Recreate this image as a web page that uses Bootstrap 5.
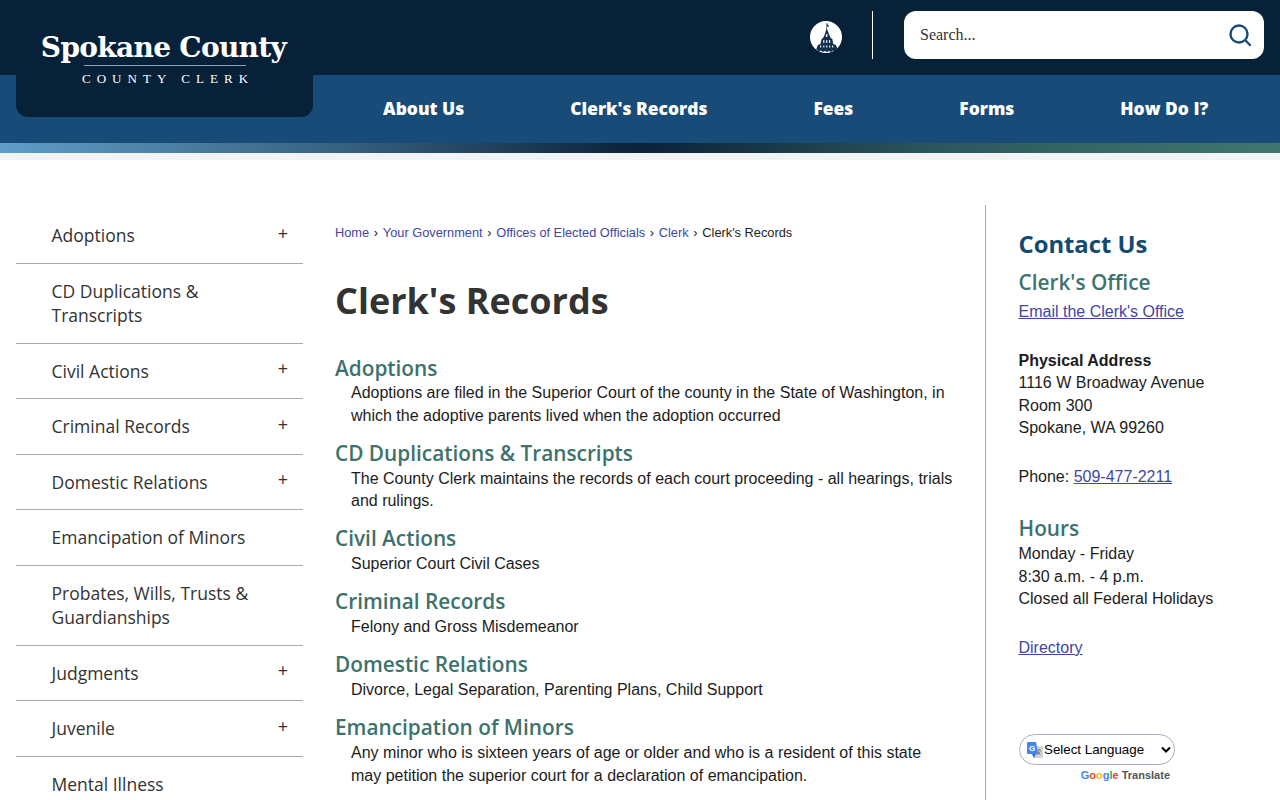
<!DOCTYPE html>
<html lang="en">
<head>
    <meta charset="UTF-8">
    <meta name="viewport" content="width=device-width, initial-scale=1.0">
    <title>Clerk's Records - Spokane County</title>
    <link href="https://cdn.jsdelivr.net/npm/bootstrap@5.3.0/dist/css/bootstrap.min.css" rel="stylesheet">
    <script src="https://cdn.jsdelivr.net/npm/bootstrap@5.3.0/dist/js/bootstrap.bundle.min.js"></script>
    <style>
        html, body { height: 800px; overflow: hidden; }
        body { font-family: "Liberation Sans", Arial, sans-serif; font-size: 16px; color: #1c1c1c; background: #fff; }
        a { color: #3f46a5; }

        /* header */
        .top-strip { height: 75px; background: #072139; padding: 11px 16px 0 0; }
        .seal-link { width: 32px; height: 32px; margin-top: 10px; margin-right: 30px; }
        .top-rule { width: 1px; height: 48px; background: #fff; margin-right: 31px; }
        .search-box { width: 360px; height: 48px; background: #fff; border-radius: 12px; padding: 0 12px 0 16px; }
        .search-box span { font-family: "Liberation Serif", serif; font-size: 16px; color: #333; }
        .nav-strip { height: 68px; background: #184b77; padding-left: 330px; padding-right: 19px; }
        .logo-block { position: absolute; left: 16px; top: 0; width: 297px; height: 117px; background: #072139; border-radius: 0 0 12px 12px; text-align: center; color: #fff; padding-top: 30px; }
        .logo-name { font-family: "DejaVu Serif", serif; font-weight: 700; font-size: 28px; line-height: 35px; letter-spacing: -.68px; padding-right: 2px; }
        .logo-rule { width: 162px; height: 1px; background: #8fa0b2; margin: 0 auto; }
        .logo-sub { font-family: "Liberation Serif", serif; font-size: 13px; letter-spacing: 6.05px; padding-left: 7px; line-height: 20px; margin-top: 3px; }
        .main-link { font-family: "Open Sans", sans-serif; font-weight: 800; font-size: 17.4px; color: #fff; text-decoration: none; line-height: 67px; padding: 0 53px; white-space: nowrap; }
        .color-band { height: 10px; background: linear-gradient(90deg, #5f9dc8 0%, #3a6584 25%, #0a2239 50%, #2e5a5e 75%, #41766f 100%); }
        .grey-band { height: 7px; background: #f1f3f5; }

        /* layout */
        .page-body { padding-top: 45px; }
        .side-col { width: 287px; margin: 3.4px 0 0 16px; flex: none; }
        .mid-col { width: 619px; margin-left: 32px; flex: none; }
        .right-col { border-left: 1px solid #a9a9a9; margin-left: 31px; padding-left: 32.5px; width: 295px; height: 600px; flex: none; position: relative; }

        /* side menu */
        .side-item { font-family: "Open Sans", sans-serif; font-size: 17.5px; line-height: 24.5px; color: #333; border-color: #a9a9a9; padding: 14.8px 50px 15.2px 35.5px; }
        .side-plus { position: absolute; right: 15px; top: 12.5px; font-size: 18px; color: #333; }

        /* middle */
        .crumbs { --bs-breadcrumb-margin-bottom: 0; --bs-breadcrumb-item-padding-x: 4.7px; --bs-breadcrumb-divider-color: #1c1c1c; --bs-breadcrumb-item-active-color: #1c1c1c; --bs-breadcrumb-divider: "›"; font-size: 12.8px; line-height: 16px; margin-top: 20px; }
        .crumbs a { text-decoration: none; }
        .page-title { font-family: "Open Sans", sans-serif; font-weight: 700; font-size: 36px; line-height: 46px; color: #333; margin: 37px 0 29.6px; }
        .rec-head { font-family: "Open Sans", sans-serif; font-weight: 600; font-size: 20.8px; line-height: 28.8px; color: #3d726d; margin: 0; }
        .rec-text { margin: 0 0 11.8px 16px; line-height: 22.4px; }

        /* right */
        .contact-title { font-family: "Open Sans", sans-serif; font-weight: 700; font-size: 23.8px; line-height: 32px; color: #134a72; margin: 23px 0 8px; }
        .contact-sub { font-family: "Open Sans", sans-serif; font-weight: 600; font-size: 20.8px; line-height: 28px; color: #3d726d; margin: 0 0 1px; }
        .office-head { margin-bottom: 5px; }
        .contact-text { line-height: 22.4px; margin: 0 0 26.35px; }
        .translate-box { position: absolute; left: 33px; top: 529px; }
        .lang-pick { width: 156px; height: 31px; border: 1px solid #a9b0bd; border-radius: 16px; background: #fff; display: flex; align-items: center; padding: 0 3px 0 6px; font-size: 13.33px; color: #000; }
        .powered { font-size: 11px; font-weight: 700; color: #555; text-align: right; margin: 3px 5px 0 0; line-height: 14px; }
        .powered b:nth-child(1) { color: #4285f4; } .powered b:nth-child(2) { color: #ea4335; } .powered b:nth-child(3) { color: #fbbc05; } .powered b:nth-child(4) { color: #4285f4; } .powered b:nth-child(5) { color: #34a853; } .powered b:nth-child(6) { color: #ea4335; }
        .gt-letter { font-family: "Liberation Sans", sans-serif; font-size: 8px; font-weight: 700; fill: #fff; }
    </style>
</head>
<body>

<header class="position-relative">
    <div class="top-strip d-flex justify-content-end">
        <div class="seal-link">
            <svg width="32" height="32" viewBox="0 0 32 32">
                <circle cx="16" cy="16" r="16" fill="#fff"/>
                <path d="M16.4 2h.7v6h-.7z M17.1 2.2l2.2 3.2-2.2.6z" fill="#33506c"/>
                <path d="M16.7 7l2.6 7 1.4 3 1.6 1 1 5 2.6 1 1.6 4-2.6 2.4-2-1-2 1.6-2-1-2 1-2-1-2 1-2-1.6-2 1-2.6-2.4 1.6-4 2.6-1 1-5 1.6-1 1.4-3z" fill="#14304c"/>
                <path d="M15.8 13h1.6v3h-1.6z M13.2 19h1.2v3h-1.2z M16.1 19h1.2v3h-1.2z M19 19h1.2v3h-1.2z M10 24.5h1.2v2h-1.2z M13.2 24.5h1.2v2h-1.2z M16.1 24.5h1.2v2h-1.2z M19 24.5h1.2v2h-1.2z M22 24.5h1.2v2h-1.2z" fill="#dfe5ea"/>
            </svg>
        </div>
        <div class="top-rule"></div>
        <div class="search-box d-flex align-items-center justify-content-between">
            <span>Search...</span>
            <svg width="24" height="24" viewBox="0 0 24 24" fill="none" stroke="#184b77" stroke-width="2.4" stroke-linecap="round">
                <circle cx="11" cy="11" r="8.5"/><path d="M17.5 17.5l4.5 4.5"/>
            </svg>
        </div>
    </div>
    <nav class="nav-strip d-flex justify-content-between">
        <a class="main-link" href="#">About Us</a>
        <a class="main-link" href="#">Clerk's Records</a>
        <a class="main-link" href="#">Fees</a>
        <a class="main-link" href="#">Forms</a>
        <a class="main-link" href="#">How Do I?</a>
    </nav>
    <div class="color-band"></div>
    <div class="grey-band"></div>
    <div class="logo-block">
        <div class="logo-name">Spokane County</div>
        <div class="logo-rule"></div>
        <div class="logo-sub">COUNTY CLERK</div>
    </div>
</header>

<div class="page-body d-flex">
    <aside class="side-col">
        <div class="list-group list-group-flush">
            <div class="list-group-item side-item">Adoptions<span class="side-plus">+</span></div>
            <div class="list-group-item side-item">CD Duplications &amp; Transcripts</div>
            <div class="list-group-item side-item">Civil Actions<span class="side-plus">+</span></div>
            <div class="list-group-item side-item">Criminal Records<span class="side-plus">+</span></div>
            <div class="list-group-item side-item">Domestic Relations<span class="side-plus">+</span></div>
            <div class="list-group-item side-item">Emancipation of Minors</div>
            <div class="list-group-item side-item">Probates, Wills, Trusts &amp; Guardianships</div>
            <div class="list-group-item side-item">Judgments<span class="side-plus">+</span></div>
            <div class="list-group-item side-item">Juvenile<span class="side-plus">+</span></div>
            <div class="list-group-item side-item">Mental Illness</div>
        </div>
    </aside>

    <main class="mid-col">
        <ol class="breadcrumb crumbs">
            <li class="breadcrumb-item"><a href="#">Home</a></li>
            <li class="breadcrumb-item"><a href="#">Your Government</a></li>
            <li class="breadcrumb-item"><a href="#">Offices of Elected Officials</a></li>
            <li class="breadcrumb-item"><a href="#">Clerk</a></li>
            <li class="breadcrumb-item active">Clerk's Records</li>
        </ol>
        <h1 class="page-title">Clerk's Records</h1>

        <h2 class="rec-head">Adoptions</h2>
        <p class="rec-text">Adoptions are filed in the Superior Court of the county in the State of Washington, in which the adoptive parents lived when the adoption occurred</p>
        <h2 class="rec-head">CD Duplications &amp; Transcripts</h2>
        <p class="rec-text">The County Clerk maintains the records of each court proceeding - all hearings, trials and rulings.</p>
        <h2 class="rec-head">Civil Actions</h2>
        <p class="rec-text">Superior Court Civil Cases</p>
        <h2 class="rec-head">Criminal Records</h2>
        <p class="rec-text">Felony and Gross Misdemeanor</p>
        <h2 class="rec-head">Domestic Relations</h2>
        <p class="rec-text">Divorce, Legal Separation, Parenting Plans, Child Support</p>
        <h2 class="rec-head">Emancipation of Minors</h2>
        <p class="rec-text">Any minor who is sixteen years of age or older and who is a resident of this state may petition the superior court for a declaration of emancipation.</p>
    </main>

    <aside class="right-col">
        <h2 class="contact-title">Contact Us</h2>
        <h3 class="contact-sub office-head">Clerk's Office</h3>
        <p class="contact-text"><a href="#">Email the Clerk's Office</a></p>
        <p class="contact-text"><strong>Physical Address</strong><br>1116 W Broadway Avenue<br>Room 300<br>Spokane, WA 99260</p>
        <p class="contact-text">Phone: <a href="#">509-477-2211</a></p>
        <h3 class="contact-sub">Hours</h3>
        <p class="contact-text">Monday - Friday<br>8:30 a.m. - 4 p.m.<br>Closed all Federal Holidays</p>
        <p class="contact-text"><a href="#">Directory</a></p>

        <div class="translate-box">
            <div class="lang-pick">
                <svg width="18" height="18" viewBox="0 0 18 18" class="flex-shrink-0">
                    <path d="M7 5h10v12H8z" fill="#d4d4d4"/>
                    <path d="M11 9h4M13 8v1M11.5 14l3-4M11.5 10l3 4" stroke="#777" stroke-width=".9" fill="none"/>
                    <path d="M2 1h8l2 12H2a1 1 0 0 1-1-1V2a1 1 0 0 1 1-1z" fill="#4285f4"/>
                    <path d="M6 13l2 4 2-4z" fill="#3367c0"/>
                    <text class="gt-letter" x="3" y="10">G</text>
                </svg>
                <span>Select Language</span>
                <svg class="ms-auto flex-shrink-0" width="10" height="8" viewBox="0 0 10 8" fill="none" stroke="#000" stroke-width="2"><path d="M1 1.5l4 4 4-4"/></svg>
            </div>
            <div class="powered"><b>G</b><b>o</b><b>o</b><b>g</b><b>l</b><b>e</b> Translate</div>
        </div>
    </aside>
</div>

</body>
</html>
